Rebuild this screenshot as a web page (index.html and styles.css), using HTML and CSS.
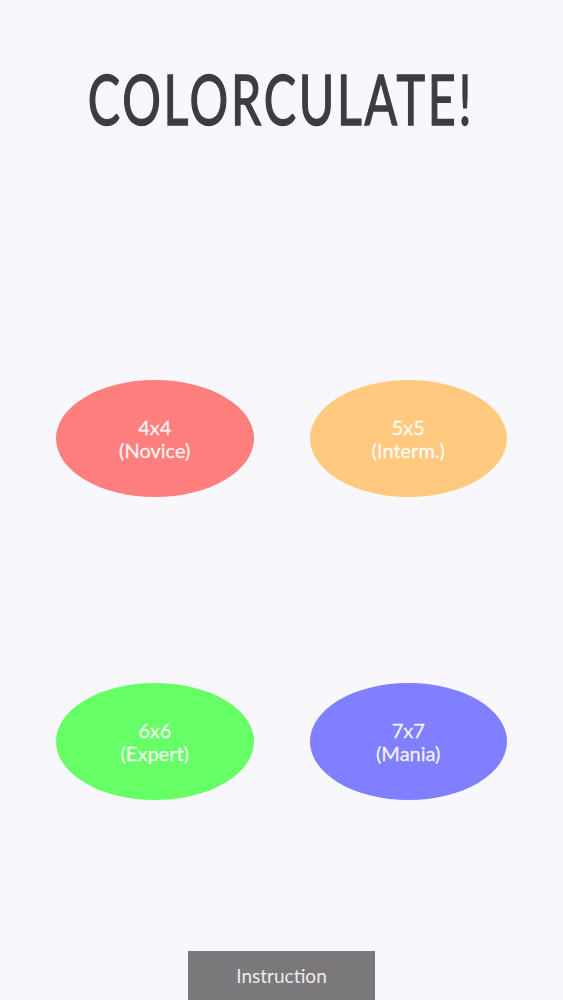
FILE: index.html
```html
<!DOCTYPE html>
<html>
<head>
<meta charset="utf-8">
<link rel="stylesheet" href="styles.css">
</head>
<body>
<div class="screen">
  <div class="header">
    <h1 class="title">COLORCULATE!</h1>
  </div>
  <div class="levels">
    <div class="level red">4x4<br>(Novice)</div>
    <div class="level orange">5x5<br>(Interm.)</div>
    <div class="level green">6x6<br>(Expert)</div>
    <div class="level blue">7x7<br>(Mania)</div>
  </div>
  <div class="footer">
    <div class="instruction">Instruction</div>
  </div>
</div>
</body>
</html>
```
FILE: styles.css
```css
html, body {
  margin: 0;
  padding: 0;
  background: #f8f8fc;
}
.screen {
  width: 563px;
  height: 1000px;
  display: flex;
  flex-direction: column;
  overflow: hidden;
}
.header {
  padding-top: 58px;
  height: 80px;
  display: flex;
  justify-content: center;
}
.title {
  margin: 0;
  display: inline-block;
  font-family: Lato, "Liberation Sans", sans-serif;
  font-weight: 400;
  font-size: 70px;
  line-height: 80px;
  letter-spacing: 4px;
  color: #3d3c40;
  -webkit-text-stroke: 1.5px #3d3c40;
  white-space: nowrap;
  transform: scaleX(0.69);
  transform-origin: center;
}
.levels {
  margin-top: 242px;
  padding: 0 56px;
  display: grid;
  grid-template-columns: 1fr 1fr;
  column-gap: 56px;
  row-gap: 186px;
}
.level {
  height: 117px;
  border-radius: 50%;
  display: flex;
  align-items: center;
  justify-content: center;
  text-align: center;
  font-family: Lato, "Liberation Sans", sans-serif;
  font-size: 20px;
  line-height: 23px;
  color: rgba(255, 255, 255, 0.88);
  -webkit-text-stroke: 0.3px rgba(255, 255, 255, 0.88);
}
.red { background: #ff7f7f; }
.orange { background: #ffca80; }
.green { background: #66ff66; }
.blue { background: #7f7fff; }
.footer {
  margin-top: auto;
  display: flex;
  justify-content: center;
}
.instruction {
  width: 187px;
  height: 49px;
  background: #7b787c;
  color: #ececec;
  font-family: Lato, "Liberation Sans", sans-serif;
  font-size: 19px;
  line-height: 49px;
  text-align: center;
}
```
